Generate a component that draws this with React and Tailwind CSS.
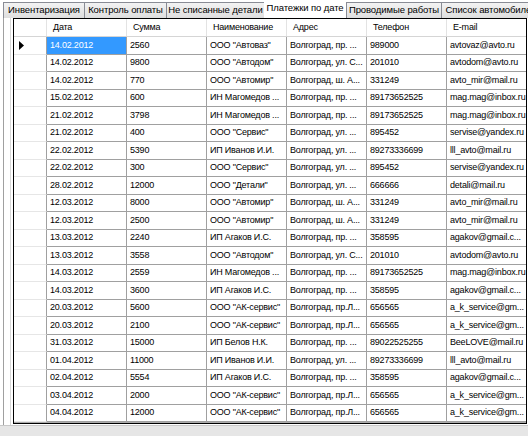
import { useState } from "react";

const tabs = [
  { name: "Инвентаризация", w: "w-[82px]" },
  { name: "Контроль оплаты", w: "w-[83px]" },
  { name: "Не списанные детали", w: "w-[99px]" },
  { name: "Платежки по дате", w: "w-[82px]", active: true },
  { name: "Проводимые работы", w: "w-[96px]" },
  { name: "Список автомобилей", w: "w-[100px]" },
];

const columns = ["Дата", "Сумма", "Наименование", "Адрес", "Телефон", "E-mail"];

const rows = [
  ["14.02.2012", "2560", 'ООО "Автоваз"', "Волгоград, пр. ...", "989000", "avtovaz@avto.ru"],
  ["14.02.2012", "9800", 'ООО "Автодом"', "Волгоград, ул. С...", "201010", "avtodom@avto.ru"],
  ["14.02.2012", "770", 'ООО "Автомир"', "Волгоград, ш. А...", "331249", "avto_mir@mail.ru"],
  ["15.02.2012", "600", "ИН Магомедов ...", "Волгоград, пр. ...", "89173652525", "mag.mag@inbox.ru"],
  ["21.02.2012", "3798", "ИН Магомедов ...", "Волгоград, пр. ...", "89173652525", "mag.mag@inbox.ru"],
  ["21.02.2012", "400", 'ООО "Сервис"', "Волгоград, ул. ...", "895452", "servise@yandex.ru"],
  ["22.02.2012", "5390", "ИП Иванов И.И.", "Волгоград, ул. ...", "89273336699", "lll_avto@mail.ru"],
  ["22.02.2012", "300", 'ООО "Сервис"', "Волгоград, ул. ...", "895452", "servise@yandex.ru"],
  ["28.02.2012", "12000", 'ООО "Детали"', "Волгоград, ул. ...", "666666", "detali@mail.ru"],
  ["12.03.2012", "8000", 'ООО "Автомир"', "Волгоград, ш. А...", "331249", "avto_mir@mail.ru"],
  ["12.03.2012", "2500", 'ООО "Автомир"', "Волгоград, ш. А...", "331249", "avto_mir@mail.ru"],
  ["13.03.2012", "2240", "ИП Агаков И.С.", "Волгоград, пр. ...", "358595", "agakov@gmail.c..."],
  ["13.03.2012", "3558", 'ООО "Автодом"', "Волгоград, ул. С...", "201010", "avtodom@avto.ru"],
  ["14.03.2012", "2559", "ИН Магомедов ...", "Волгоград, пр. ...", "89173652525", "mag.mag@inbox.ru"],
  ["14.03.2012", "3600", "ИП Агаков И.С.", "Волгоград, пр. ...", "358595", "agakov@gmail.c..."],
  ["20.03.2012", "5600", 'ООО "АК-сервис"', "Волгоград, пр.Л...", "656565", "a_k_service@gm..."],
  ["20.03.2012", "2100", 'ООО "АК-сервис"', "Волгоград, пр.Л...", "656565", "a_k_service@gm..."],
  ["31.03.2012", "15000", "ИП Белов Н.К.", "Волгоград, пр. ...", "89022525255", "BeeLOVE@mail.ru"],
  ["01.04.2012", "11000", "ИП Иванов И.И.", "Волгоград, ул. ...", "89273336699", "lll_avto@mail.ru"],
  ["02.04.2012", "5554", "ИП Агаков И.С.", "Волгоград, пр. ...", "358595", "agakov@gmail.c..."],
  ["03.04.2012", "2000", 'ООО "АК-сервис"', "Волгоград, пр.Л...", "656565", "a_k_service@gm..."],
  ["04.04.2012", "12000", 'ООО "АК-сервис"', "Волгоград, пр.Л...", "656565", "a_k_service@gm..."],
];

function App() {
  const [selected] = useState({ row: 0, col: 0 });

  return (
    <div className="w-[528px] h-[436px] overflow-hidden bg-white flex flex-col font-['Liberation_Sans',Arial,sans-serif] text-[9px] tracking-[-0.2px] text-black">
      {/* tabs */}
      <div className="h-[18px] flex items-end pl-[3px] shrink-0 text-[9.5px] tracking-[-0.1px]">
        {tabs.map((tab) =>
          tab.active ? (
            <div
              key={tab.name}
              className={`${tab.w} h-[18px] shrink-0 bg-white flex items-center justify-center whitespace-nowrap pb-[1px]`}
            >
              {tab.name}
            </div>
          ) : (
            <div
              key={tab.name}
              className={`${tab.w} h-[16px] shrink-0 border border-b-0 border-[#898c95] bg-gradient-to-b from-[#f3f3f3] to-[#dedede] flex items-center justify-center whitespace-nowrap overflow-hidden -mr-px`}
            >
              {tab.name}
            </div>
          )
        )}
      </div>

      {/* tab page */}
      <div className="flex-1 flex flex-col ml-[3px] border-l border-[#a0a0a0] pl-[6px] min-h-0">
        <div className="flex-1 flex border-l border-[#d8d8d8] pl-[2px] min-h-0">
          <div className="w-[514px] h-[406px] border border-black bg-[#ababab] overflow-hidden shrink-0">
            {/* header */}
            <div className="flex h-[18px] bg-white border-b border-[#d5d5d5]">
              <div className="w-[33px] shrink-0 border-r border-[#e3e3e3]" />
              {columns.map((c) => (
                <div
                  key={c}
                  className="w-[80px] shrink-0 border-r border-[#e3e3e3] pl-[6px] flex items-center whitespace-nowrap"
                >
                  {c}
                </div>
              ))}
            </div>
            {/* rows */}
            {rows.map((r, i) => (
              <div key={i} className="flex h-[17.5px] bg-white">
                <div className="w-[33px] shrink-0 border-r border-b border-r-[#a0a0a0] border-b-[#e6e6e6] flex items-center pl-[5px]">
                  {i === selected.row && (
                    <svg width="5" height="9" viewBox="0 0 5 9">
                      <path d="M0 0 L5 4.5 L0 9 Z" fill="#000" />
                    </svg>
                  )}
                </div>
                {r.map((v, j) => {
                  const isSel = i === selected.row && j === selected.col;
                  return (
                    <div
                      key={j}
                      className={`w-[80px] shrink-0 border-r border-b border-[#a0a0a0] pl-[3px] flex items-center whitespace-nowrap overflow-hidden ${
                        isSel ? "bg-[#3399ff] text-white" : ""
                      }`}
                    >
                      {v}
                    </div>
                  );
                })}
              </div>
            ))}
          </div>
        </div>
      </div>

      {/* bottom band */}
      <div className="h-[11px] shrink-0 border-t border-[#c8c8c8] bg-[#e6e6e6]" />
    </div>
  );
}

export default App;
